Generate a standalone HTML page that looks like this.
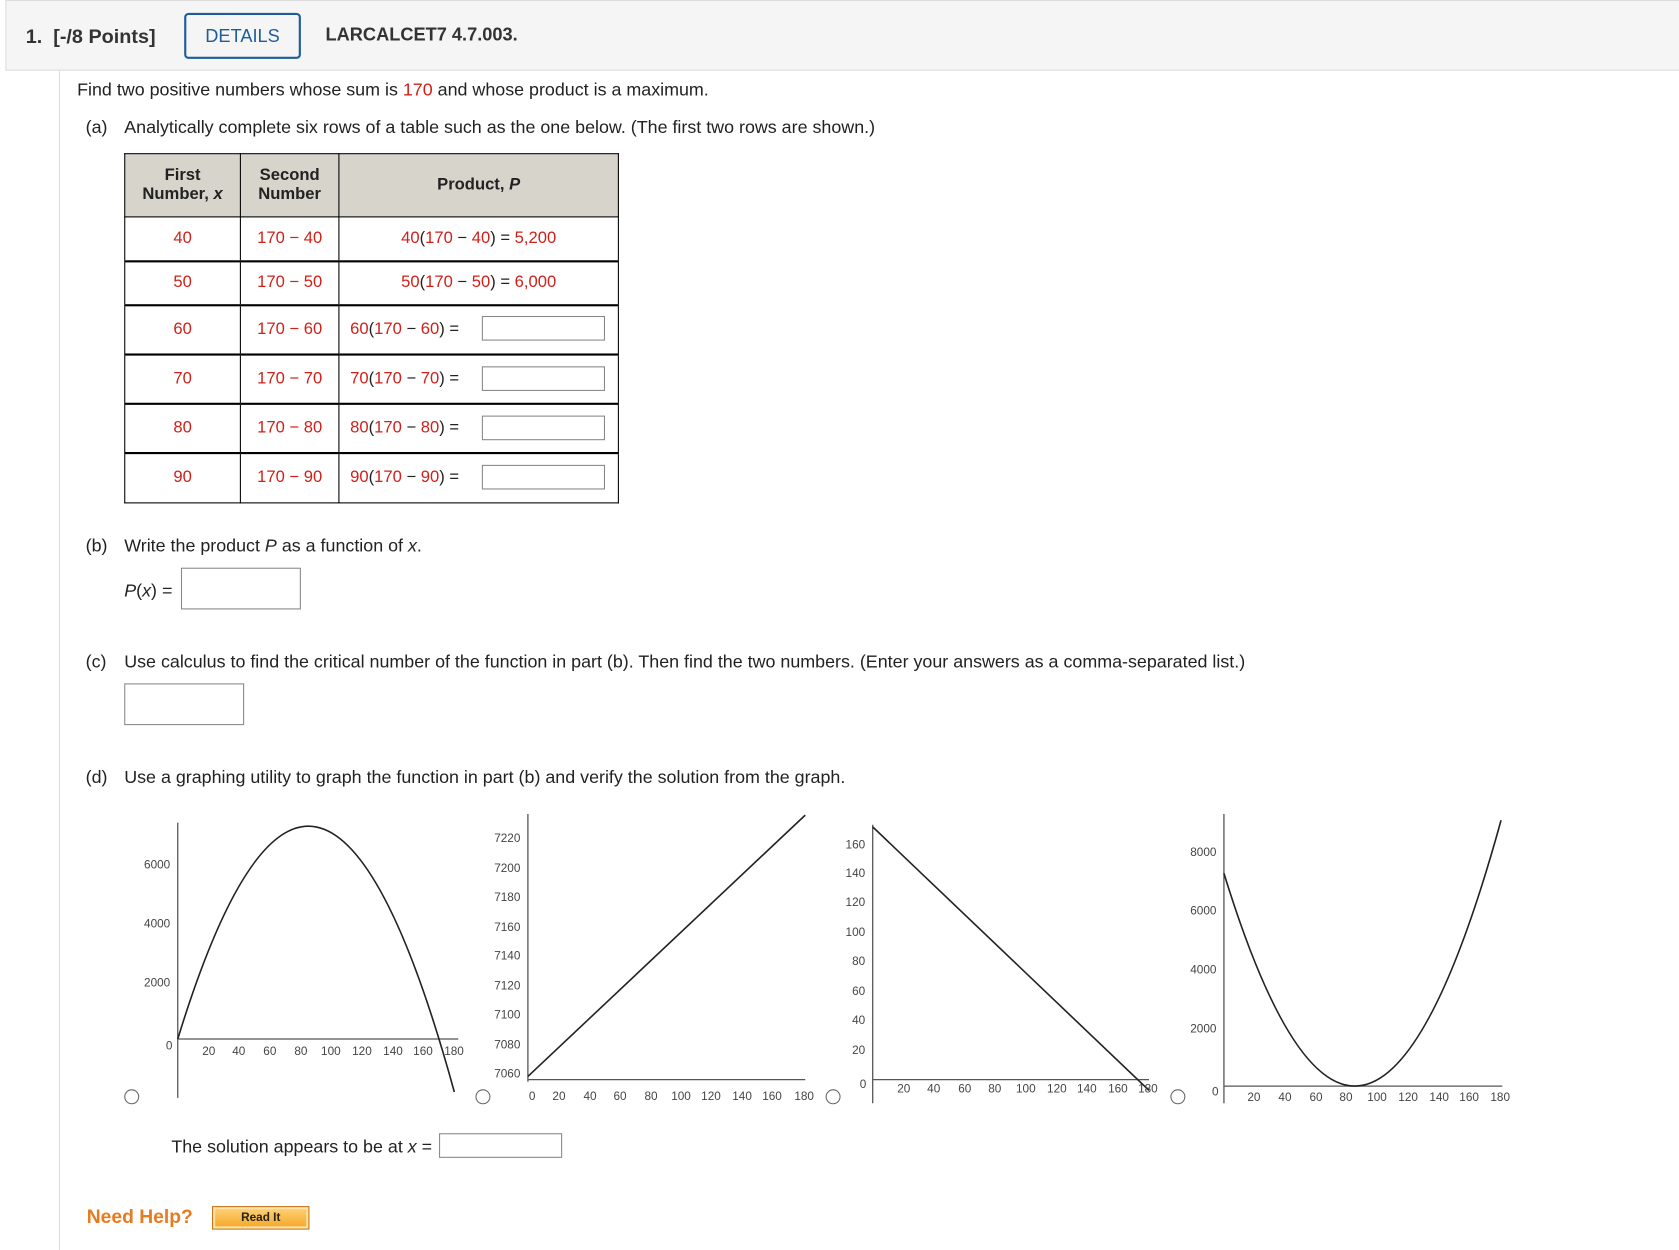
<!DOCTYPE html>
<html><head><meta charset="utf-8"><style>
html,body{margin:0;padding:0;background:#fff;}
body{width:1679px;height:1250px;overflow:hidden;position:relative;}
#pg{position:absolute;left:0;top:0;width:1568px;height:1167px;transform:scale(1.0708,1.0711);transform-origin:0 0;font-family:"Liberation Sans","DejaVu Sans",sans-serif;color:#222;}
.a{position:absolute;white-space:nowrap;}
.t{font-size:16.7px;}
.r{color:#d0201a;}
.inp{position:absolute;border:1px solid #888;background:#fff;box-sizing:border-box;}
table{position:absolute;left:116px;top:143px;border-collapse:collapse;font-size:15.5px;}
td,th{border:1px solid #000;text-align:center;padding:0;}
th{background:#d7d4cc;font-weight:bold;line-height:18px;}
tr.d td{border-top:2px solid #000;}
</style></head><body><div id="pg">
<div class="a" style="left:5px;top:0;width:1570px;height:66px;background:#f5f5f5;border:1px solid #ddd;box-sizing:border-box;"></div>
<div class="a" style="left:24px;top:23px;font-size:18.5px;font-weight:bold;color:#333;">1.&nbsp; [-/8 Points]</div>
<div class="a" style="left:172px;top:12px;width:109px;height:43px;border:2px solid #1f5c99;border-radius:4px;box-sizing:border-box;color:#1f5c99;font-size:17px;text-align:center;line-height:39px;">DETAILS</div>
<div class="a" style="left:304px;top:23px;font-size:17px;font-weight:bold;color:#333;">LARCALCET7 4.7.003.</div>
<div class="a" style="left:55px;top:66px;width:1px;height:1101px;background:#ddd;"></div>
<div class="a t" style="left:72px;top:74px;">Find two positive numbers whose sum is <span class="r">170</span> and whose product is a maximum.</div>
<div class="a t" style="left:80px;top:109px;">(a)</div>
<div class="a t" style="left:116px;top:109px;">Analytically complete six rows of a table such as the one below. (The first two rows are shown.)</div>
<table>
<tr style="height:59px"><th style="width:107px">First<br>Number, <i>x</i></th><th style="width:91px">Second<br>Number</th><th style="width:260px">Product, <i>P</i></th></tr>
<tr style="height:41px"><td class="r">40</td><td class="r">170 − 40</td><td><span class="r">40</span>(<span class="r">170</span> − <span class="r">40</span>) = <span class="r">5,200</span></td></tr>
<tr class="d" style="height:41px"><td class="r">50</td><td class="r">170 − 50</td><td><span class="r">50</span>(<span class="r">170</span> − <span class="r">50</span>) = <span class="r">6,000</span></td></tr>
<tr class="d" style="height:46px"><td class="r">60</td><td class="r">170 − 60</td><td style="text-align:left;padding-left:10px"><span class="r">60</span>(<span class="r">170</span> − <span class="r">60</span>) = </td></tr>
<tr class="d" style="height:46px"><td class="r">70</td><td class="r">170 − 70</td><td style="text-align:left;padding-left:10px"><span class="r">70</span>(<span class="r">170</span> − <span class="r">70</span>) = </td></tr>
<tr class="d" style="height:46px"><td class="r">80</td><td class="r">170 − 80</td><td style="text-align:left;padding-left:10px"><span class="r">80</span>(<span class="r">170</span> − <span class="r">80</span>) = </td></tr>
<tr class="d" style="height:47px"><td class="r">90</td><td class="r">170 − 90</td><td style="text-align:left;padding-left:10px"><span class="r">90</span>(<span class="r">170</span> − <span class="r">90</span>) = </td></tr>
</table>
<div class="inp" style="left:450px;top:295px;width:115px;height:23px"></div>
<div class="inp" style="left:450px;top:342px;width:115px;height:23px"></div>
<div class="inp" style="left:450px;top:388px;width:115px;height:23px"></div>
<div class="inp" style="left:450px;top:434px;width:115px;height:23px"></div>
<div class="a t" style="left:80px;top:500px;">(b)</div>
<div class="a t" style="left:116px;top:500px;">Write the product <i>P</i> as a function of <i>x</i>.</div>
<div class="a t" style="left:116px;top:542px;"><i>P</i>(<i>x</i>) =</div>
<div class="inp" style="left:169px;top:530px;width:112px;height:39px"></div>
<div class="a t" style="left:80px;top:608px;">(c)</div>
<div class="a t" style="left:116px;top:608px;">Use calculus to find the critical number of the function in part (b). Then find the two numbers. (Enter your answers as a comma-separated list.)</div>
<div class="inp" style="left:116px;top:638px;width:112px;height:39px"></div>
<div class="a t" style="left:80px;top:716px;">(d)</div>
<div class="a t" style="left:116px;top:716px;">Use a graphing utility to graph the function in part (b) and verify the solution from the graph.</div>
<svg class="a" style="left:0;top:0" width="1568" height="1167" font-family="Liberation Sans,sans-serif" font-size="11" fill="#444">
<g stroke="#666" stroke-width="1" fill="none">
<circle cx="123" cy="1024" r="6.5"/><circle cx="451" cy="1024" r="6.5"/><circle cx="778" cy="1024" r="6.5"/><circle cx="1100" cy="1024" r="6.5"/>
</g>
<g stroke="#555" stroke-width="1.2" fill="none">
<path d="M166 768V1025M166 970H428"/>
<path d="M493 760V1010M493 1008H752"/>
<path d="M815 770V1030M815 1008H1073"/>
<path d="M1143 760V1030M1143 1014H1403"/>
</g>
<g stroke="#222" stroke-width="1.5" fill="none">
<path d="M166 970Q295.2 549.3 424.3 1019.5"/>
<path d="M493 1005L752 761"/>
<path d="M815 772L1073 1018"/>
<path d="M1143 815.3Q1272.4 1236 1401.8 765.8"/>
</g>
<g text-anchor="end">
<text x="159" y="811">6000</text><text x="159" y="866">4000</text><text x="159" y="921">2000</text><text x="161" y="980">0</text>
<text x="486" y="786">7220</text><text x="486" y="814">7200</text><text x="486" y="841">7180</text><text x="486" y="869">7160</text><text x="486" y="896">7140</text><text x="486" y="924">7120</text><text x="486" y="951">7100</text><text x="486" y="979">7080</text><text x="486" y="1006">7060</text>
<text x="808" y="792">160</text><text x="808" y="819">140</text><text x="808" y="846">120</text><text x="808" y="874">100</text><text x="808" y="901">80</text><text x="808" y="929">60</text><text x="808" y="956">40</text><text x="808" y="984">20</text><text x="809" y="1016">0</text>
<text x="1136" y="799">8000</text><text x="1136" y="854">6000</text><text x="1136" y="909">4000</text><text x="1136" y="964">2000</text><text x="1138" y="1023">0</text>
</g>
<g text-anchor="middle">
<text x="195" y="985">20</text><text x="223" y="985">40</text><text x="252" y="985">60</text><text x="281" y="985">80</text><text x="309" y="985">100</text><text x="338" y="985">120</text><text x="367" y="985">140</text><text x="395" y="985">160</text><text x="424" y="985">180</text>
<text x="497" y="1027">0</text><text x="522" y="1027">20</text><text x="551" y="1027">40</text><text x="579" y="1027">60</text><text x="608" y="1027">80</text><text x="636" y="1027">100</text><text x="664" y="1027">120</text><text x="693" y="1027">140</text><text x="721" y="1027">160</text><text x="751" y="1027">180</text>
<text x="844" y="1020">20</text><text x="872" y="1020">40</text><text x="901" y="1020">60</text><text x="929" y="1020">80</text><text x="958" y="1020">100</text><text x="987" y="1020">120</text><text x="1015" y="1020">140</text><text x="1044" y="1020">160</text><text x="1072" y="1020">180</text>
<text x="1171" y="1028">20</text><text x="1200" y="1028">40</text><text x="1229" y="1028">60</text><text x="1257" y="1028">80</text><text x="1286" y="1028">100</text><text x="1315" y="1028">120</text><text x="1344" y="1028">140</text><text x="1372" y="1028">160</text><text x="1401" y="1028">180</text>
</g>
</svg>
<div class="a t" style="left:160px;top:1061px;">The solution appears to be at <i>x</i> =</div>
<div class="inp" style="left:410px;top:1058px;width:115px;height:23px"></div>
<div class="a" style="left:81px;top:1126px;font-size:18px;font-weight:bold;color:#e87b1e;">Need Help?</div>
<div class="a" style="left:198px;top:1126px;width:91px;height:22px;box-sizing:border-box;border:1px solid #c8741a;background:linear-gradient(#ffd27a,#f5a623);box-shadow:inset 0 0 0 2px #fbe3a8;font-size:11px;font-weight:bold;text-align:center;line-height:20px;color:#222;">Read It</div>
</div></body></html>
